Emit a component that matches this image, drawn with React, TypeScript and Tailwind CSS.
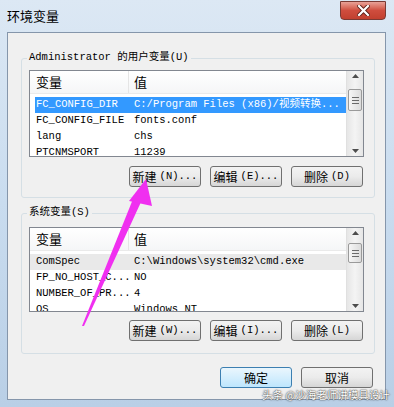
import React from 'react'

const cjk = '"Noto Sans CJK SC", sans-serif'
const mono = '"Liberation Mono", "Noto Sans CJK SC", monospace'

type Row = { name: string; value: string; selected?: boolean; soft?: boolean }

function ScrollBar({ thumbTop, thumbHeight }: { thumbTop: number; thumbHeight: number }) {
  return (
    <div className="relative w-[17px] h-full bg-gradient-to-r from-[#e6e6e6] via-[#f4f4f4] to-[#e6e6e6] border-l border-[#e0e0e0]">
      <div className="absolute top-[3px] left-0 w-full flex justify-center">
        <svg width="7" height="4" viewBox="0 0 7 4"><path d="M3.5 0 L7 4 L0 4 Z" fill="#4d4d4d" /></svg>
      </div>
      <div
        className="absolute left-[1px] w-[14px] rounded-[2px] border border-[#9a9a9a] bg-gradient-to-r from-[#f6f6f6] to-[#dcdcdc] flex flex-col items-center justify-center gap-[2px]"
        style={{ top: thumbTop, height: thumbHeight }}
      >
        <div className="w-[7px] h-px bg-[#6a6a6a]" />
        <div className="w-[7px] h-px bg-[#6a6a6a]" />
        <div className="w-[7px] h-px bg-[#6a6a6a]" />
      </div>
      <div className="absolute bottom-[3px] left-0 w-full flex justify-center">
        <svg width="7" height="4" viewBox="0 0 7 4"><path d="M0 0 L7 0 L3.5 4 Z" fill="#4d4d4d" /></svg>
      </div>
    </div>
  )
}

function VarList({ rows, height, thumbTop, thumbHeight }: { rows: Row[]; height: number; thumbTop: number; thumbHeight: number }) {
  return (
    <div className="flex w-[335px] border border-[#828790] bg-white overflow-hidden" style={{ height }}>
      <div className="flex-1 flex flex-col overflow-hidden">
        <div className="flex h-[23px] shrink-0 items-center bg-gradient-to-b from-white to-[#f5f6f7] border-b border-[#eaeaea] text-[13px] text-black" style={{ fontFamily: cjk }}>
          <div className="w-[99px] pl-[6px] border-r border-[#e5e5e5] h-full flex items-center">变量</div>
          <div className="pl-[5px]">值</div>
        </div>
        <div className="pt-[3px]">
          {rows.map((r) => {
            const tone = r.selected
              ? 'ml-[5px] bg-[#3399ff] text-white'
              : r.soft
                ? 'pl-[5px] bg-[#e9e9e9] text-black'
                : 'ml-[5px] text-black'
            return (
              <div
                key={r.name}
                className={`flex h-[16px] items-center text-[10.5px] whitespace-nowrap ${tone}`}
                style={{ fontFamily: mono }}
              >
                <div className="w-[99px] pl-[1px]">{r.name}</div>
                <div>{r.value}</div>
              </div>
            )
          })}
        </div>
      </div>
      <ScrollBar thumbTop={thumbTop} thumbHeight={thumbHeight} />
    </div>
  )
}

function Btn({ label, hot, def }: { label: string; hot: string; def?: boolean }) {
  return (
    <div
      className={`w-[72px] h-[21px] rounded-[3px] border flex items-center justify-center text-[12px] text-black ${def ? 'border-[#3c7fb1] bg-gradient-to-b from-[#eaf6fd] to-[#bee6fd]' : 'border-[#707070] bg-gradient-to-b from-[#f3f3f3] via-[#ebebeb] to-[#d6d6d6]'}`}
    >
      <span style={{ fontFamily: cjk }}>{label}</span>
      {hot && <span className="text-[10.5px] ml-[3px]" style={{ fontFamily: mono }}>{hot}</span>}
    </div>
  )
}

function Group({ label, children, height }: { label: string; children: React.ReactNode; height: number }) {
  return (
    <div className="relative w-[354px] ml-[13px] border border-[#d5dfe5] rounded-[3px] px-[7px]" style={{ height }}>
      <div className="absolute -top-[9px] left-[5px] px-[2px] bg-[#f0f0f0] text-[10.5px] text-black whitespace-nowrap" style={{ fontFamily: mono }}>
        {label}
      </div>
      {children}
    </div>
  )
}

export default function App() {
  const userRows: Row[] = [
    { name: 'FC_CONFIG_DIR', value: 'C:/Program Files (x86)/视频转换...', selected: true },
    { name: 'FC_CONFIG_FILE', value: 'fonts.conf' },
    { name: 'lang', value: 'chs' },
    { name: 'PTCNMSPORT', value: '11239' },
  ]
  const sysRows: Row[] = [
    { name: 'ComSpec', value: 'C:\\Windows\\system32\\cmd.exe', soft: true },
    { name: 'FP_NO_HOST_C...', value: 'NO' },
    { name: 'NUMBER_OF_PR...', value: '4' },
    { name: 'OS', value: 'Windows_NT' },
  ]

  return (
    <div className="relative w-[394px] h-[407px] overflow-hidden bg-gradient-to-b from-[#dce8f4] via-[#c9dcef] to-[#b9cfe6]">
      {/* title bar */}
      <div className="h-[32px] flex items-start pt-[6px] pl-[7px] text-[13px] text-black" style={{ fontFamily: cjk }}>
        环境变量
      </div>
      <div className="absolute top-[1px] left-[340px] w-[46px] h-[19px] rounded-b-[4px] border border-[#7a3a34] bg-gradient-to-b from-[#e8a197] via-[#cf4d3e] to-[#c2402f] flex items-center justify-center">
        <svg width="13" height="11" viewBox="0 0 13 11">
          <path d="M2 1 L11 10 M11 1 L2 10" stroke="#5a1f18" strokeWidth="4" strokeLinecap="square" />
          <path d="M2 1 L11 10 M11 1 L2 10" stroke="white" strokeWidth="2.2" strokeLinecap="square" />
        </svg>
      </div>

      {/* client area */}
      <div className="ml-[7px] w-[379px] h-[368px] bg-[#f0f0f0] border border-[#8596ab] pt-[25px]">
        <Group label="Administrator 的用户变量(U)" height={140}>
          <div className="pt-[11px] flex flex-col">
            <VarList rows={userRows} height={87} thumbTop={18} thumbHeight={22} />
            <div className="flex justify-end gap-[9px] mt-[9px] pr-[4px]">
              <Btn label="新建" hot="(N)..." />
              <Btn label="编辑" hot="(E)..." />
              <Btn label="删除" hot="(D)" />
            </div>
          </div>
        </Group>
        <div className="h-[15px]" />
        <Group label="系统变量(S)" height={141}>
          <div className="pt-[13px] flex flex-col">
            <VarList rows={sysRows} height={85} thumbTop={15} thumbHeight={20} />
            <div className="flex justify-end gap-[9px] mt-[8px] pr-[4px]">
              <Btn label="新建" hot="(W)..." />
              <Btn label="编辑" hot="(I)..." />
              <Btn label="删除" hot="(L)" />
            </div>
          </div>
        </Group>
        <div className="flex justify-end gap-[9px] mt-[13px] pr-[12px]">
          <Btn label="确定" hot="" def />
          <Btn label="取消" hot="" />
        </div>
      </div>

      {/* watermark */}
      <div
        className="absolute left-[262px] top-[388px] text-[10.5px] leading-[14px] text-white whitespace-nowrap [text-shadow:0_0_2px_#333,0_0_1px_#333]"
        style={{ fontFamily: cjk }}
      >
        头条 @沙海老师讲模具设计
      </div>

      {/* magenta arrow overlay */}
      <svg className="absolute left-0 top-0 pointer-events-none" width="394" height="407" viewBox="0 0 394 407">
        <path d="M82 326 L133 199 L141 202 L84 326 Z" fill="#f02ff0" />
        <path d="M146 179 L129 201 L152 206 Z" fill="#f02ff0" />
      </svg>
    </div>
  )
}
